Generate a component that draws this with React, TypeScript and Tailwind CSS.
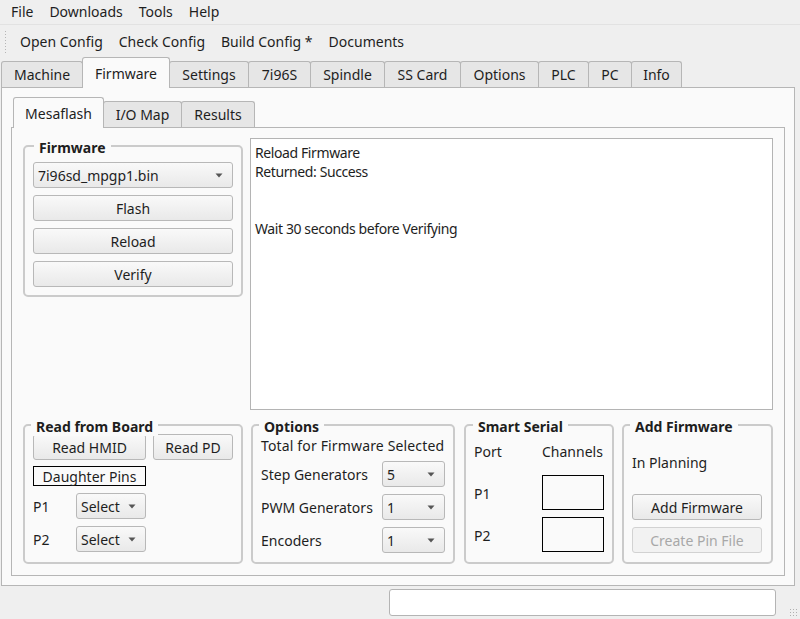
import React from "react";

const outerTabs = [
  { label: "Machine", w: "w-[82px]" },
  { label: "Firmware", w: "w-[88px]", active: true },
  { label: "Settings", w: "w-[80px]" },
  { label: "7i96S", w: "w-[63px]" },
  { label: "Spindle", w: "w-[75px]" },
  { label: "SS Card", w: "w-[77px]" },
  { label: "Options", w: "w-[79px]" },
  { label: "PLC", w: "w-[51px]" },
  { label: "PC", w: "w-[44px]" },
  { label: "Info", w: "w-[51px]" },
];

const innerTabs = [
  { label: "Mesaflash", w: "w-[91px]", active: true },
  { label: "I/O Map", w: "w-[79px]" },
  { label: "Results", w: "w-[74px]" },
];

function Arrow() {
  return (
    <svg width="8" height="5" viewBox="0 0 8 5" className="shrink-0">
      <path d="M0.5 0.5 L7.5 0.5 L4 4.5 Z" fill="#555" />
    </svg>
  );
}

function Button({ children, className = "", disabled = false }: { children: React.ReactNode; className?: string; disabled?: boolean }) {
  return (
    <div
      className={
        "h-[26px] flex items-center justify-center rounded-[3px] border " +
        (disabled
          ? "border-[#d2d2d2] bg-[#f2f2f2] text-[#a8a8a8] "
          : "border-[#b8b8b8] bg-gradient-to-b from-[#f9f9f9] to-[#e9e9e9] ") +
        className
      }
    >
      {children}
    </div>
  );
}

function Combo({ value, className = "" }: { value: string; className?: string }) {
  return (
    <div
      className={
        "h-[26px] flex items-center justify-between rounded-[3px] border border-[#b8b8b8] bg-gradient-to-b from-[#f9f9f9] to-[#e9e9e9] pl-[4px] pr-[9px] " +
        className
      }
    >
      <span>{value}</span>
      <Arrow />
    </div>
  );
}

function Group({
  title,
  className = "",
  titleLeft = "left-[6px]",
  children,
}: {
  title: string;
  className?: string;
  titleLeft?: string;
  children: React.ReactNode;
}) {
  return (
    <div className={"relative rounded-[5px] border-2 border-[#cbcbcb] " + className}>
      <span className={"absolute -top-[9px] bg-[#fafafa] px-[5px] font-bold leading-[19px] " + titleLeft}>
        {title}
      </span>
      {children}
    </div>
  );
}

function Tab({ label, w, active }: { label: string; w: string; active?: boolean }) {
  return (
    <div
      className={
        "-ml-px first:ml-0 flex items-center justify-center border border-b-0 border-[#b6b6b6] rounded-t-[3px] " +
        w +
        (active ? " h-[31px] -mb-px relative z-10 bg-[#fafafa]" : " h-[26px] bg-[#e6e6e6]")
      }
    >
      {label}
    </div>
  );
}

export default function App() {
  return (
    <div
      className="w-[800px] h-[619px] bg-[#efefef] flex flex-col text-[14px] text-[#1e1e1e] overflow-hidden"
      style={{ fontFamily: '"Noto Sans", sans-serif' }}
    >
      {/* Menu bar */}
      <div className="h-[24px] flex items-center gap-[16px] pl-[11px] leading-none">
        <span>File</span>
        <span>Downloads</span>
        <span>Tools</span>
        <span>Help</span>
      </div>

      {/* Toolbar */}
      <div className="h-[34px] flex items-center border-t border-[#e2e2e2]">
        <div className="ml-[4px] w-[3px] h-[24px] bg-[radial-gradient(#b5b5b5_0.7px,transparent_0.8px)] bg-[length:3px_3px]" />
        <div className="flex items-center gap-[16px] ml-[13px]">
          <span>Open Config</span>
          <span>Check Config</span>
          <span>Build Config *</span>
          <span>Documents</span>
        </div>
      </div>

      {/* Outer tab widget */}
      <div className="flex flex-col pl-px pr-[5px]">
        <div className="h-[29px] flex items-end">
          {outerTabs.map((t) => (
            <Tab key={t.label} {...t} />
          ))}
        </div>
        <div className="h-[499px] bg-[#fafafa] border border-[#b6b6b6] pt-[10px] pl-[9px] pr-[9px]">
          {/* Inner tab widget */}
          <div className="flex flex-col">
            <div className="h-[29px] flex items-end pl-[2px]">
              {innerTabs.map((t) => (
                <Tab key={t.label} {...t} />
              ))}
            </div>
            <div className="h-[449px] border border-[#b6b6b6] bg-[#fafafa] pt-[10px] px-[11px] flex flex-col">
              {/* Top section */}
              <div className="flex gap-[7px] h-[272px]">
                <div className="w-[220px] pt-[7px]">
                  <Group title="Firmware" titleLeft="left-[9px]" className="h-[152px] px-[8px] pt-[15px]">
                    <div className="flex flex-col gap-[7px]">
                      <Combo value="7i96sd_mpgp1.bin" />
                      <Button>Flash</Button>
                      <Button>Reload</Button>
                      <Button>Verify</Button>
                    </div>
                  </Group>
                </div>
                <div className="flex-1 bg-white border border-[#b4b4b4] px-[4px] pt-[4px] leading-[19px] tracking-[-0.4px]">
                  <div>Reload Firmware</div>
                  <div>Returned: Success</div>
                  <div className="h-[19px]" />
                  <div className="h-[19px]" />
                  <div>Wait 30 seconds before Verifying</div>
                </div>
              </div>

              {/* Bottom groups */}
              <div className="flex mt-[14px] h-[140px]">
                <Group title="Read from Board" className="w-[220px] px-[8px] pt-[8px]">
                  <div className="flex gap-[7px]">
                    <Button className="w-[113px]">Read HMID</Button>
                    <Button className="w-[80px]">Read PD</Button>
                  </div>
                  <div className="mt-[6px] w-[113px] h-[20px] border border-black flex items-center justify-center">
                    Daughter Pins
                  </div>
                  <div className="mt-[7px] flex items-center">
                    <span className="w-[43px]">P1</span>
                    <Combo value="Select" className="w-[70px]" />
                  </div>
                  <div className="mt-[7px] flex items-center">
                    <span className="w-[43px]">P2</span>
                    <Combo value="Select" className="w-[70px]" />
                  </div>
                </Group>

                <Group title="Options" className="ml-[8px] w-[204px] px-[8px] pt-[8px]">
                  <div className="leading-[19px] mt-[2px] tracking-[0.15px]">Total for Firmware Selected</div>
                  <div className="mt-[6px] flex items-center justify-between">
                    <span>Step Generators</span>
                    <Combo value="5" className="w-[63px]" />
                  </div>
                  <div className="mt-[7px] flex items-center justify-between">
                    <span>PWM Generators</span>
                    <Combo value="1" className="w-[63px]" />
                  </div>
                  <div className="mt-[7px] flex items-center justify-between">
                    <span>Encoders</span>
                    <Combo value="1" className="w-[63px]" />
                  </div>
                </Group>

                <Group title="Smart Serial" titleLeft="left-[7px]" className="ml-[9px] w-[150px] px-[8px] pt-[16px]">
                  <div className="flex leading-[19px]">
                    <span className="w-[68px]">Port</span>
                    <span>Channels</span>
                  </div>
                  <div className="mt-[14px] flex items-center">
                    <span className="w-[68px] mt-[2px]">P1</span>
                    <div className="w-[62px] h-[35px] border border-black" />
                  </div>
                  <div className="mt-[7px] flex items-center">
                    <span className="w-[68px] mt-[2px]">P2</span>
                    <div className="w-[62px] h-[35px] border border-black" />
                  </div>
                </Group>

                <Group title="Add Firmware" className="ml-[8px] w-[151px] px-[8px] pt-[27px]">
                  <div className="leading-[19px]">In Planning</div>
                  <div className="mt-[22px] flex flex-col gap-[7px]">
                    <Button className="w-[130px]">Add Firmware</Button>
                    <Button className="w-[130px]" disabled>
                      Create Pin File
                    </Button>
                  </div>
                </Group>
              </div>
            </div>
          </div>
        </div>
      </div>

      {/* Status bar */}
      <div className="flex-1 flex items-start pt-[3px] relative">
        <div className="ml-[389px] w-[387px] h-[27px] bg-white border border-[#b4b4b4] rounded-[3px]" />
        <div className="absolute right-[2px] bottom-[2px] w-[9px] h-[9px] bg-[radial-gradient(#b0b0b0_0.7px,transparent_0.8px)] bg-[length:3px_3px]" />
      </div>
    </div>
  );
}
